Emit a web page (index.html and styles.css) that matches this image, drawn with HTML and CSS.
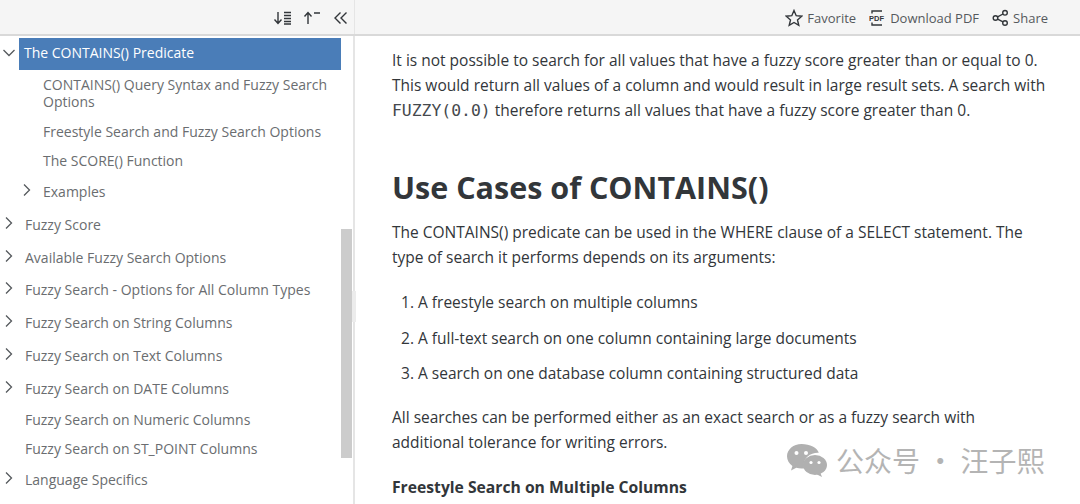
FILE: index.html
```html
<!DOCTYPE html>
<html lang="en">
<head>
    <meta charset="UTF-8">
    <title>Use Cases of CONTAINS()</title>
    <link rel="stylesheet" href="styles.css">
</head>
<body>
    <div class="page">
        <div class="topbar">
            <div class="toc-tools">
                <svg class="ico" width="20" height="16" viewBox="0 0 20 16"><path d="M5 2v11M1.500 9.500 5 13.500 8.500 9.500M11 2.500h7M11 5.500h7M11 8.500h7M11 11.500h7M11 14h7" /></svg>
                <svg class="ico" width="20" height="16" viewBox="0 0 20 16"><path d="M5 14V3M1.500 6.500 5 2.500 8.500 6.500M11 3h6" /></svg>
                <svg class="ico" width="16" height="16" viewBox="0 0 16 16"><path d="M7.500 2.500 2 8l5.500 5.500M13.500 2.500 8 8l5.500 5.500" /></svg>
            </div>
            <div class="actions">
                <span class="action">
                    <svg class="ico" width="18" height="18" viewBox="0 0 18 18"><path d="M9 1.500 11.200 6.700 16.800 7.200 12.500 10.900 13.800 16.400 9 13.500 4.200 16.400 5.500 10.900 1.200 7.200 6.800 6.700Z" /></svg>
                    Favorite
                </span>
                <span class="action">
                    <svg class="ico" width="17" height="18" viewBox="0 0 17 18"><path d="M3 4.500V2h10M3 13.500V16h10" /><text class="pdf-mark" x="0" y="11.500">PDF</text></svg>
                    Download PDF
                </span>
                <span class="action">
                    <svg class="ico" width="17" height="18" viewBox="0 0 17 18"><circle cx="13" cy="3.800" r="2.300" /><circle cx="13" cy="14" r="2.300" /><circle cx="3.500" cy="9" r="2.300" /><path d="M5.600 7.900 11 5M5.600 10.100 11 12.900" /></svg>
                    Share
                </span>
            </div>
        </div>
        <div class="main">
            <nav class="toc">
                <div class="row row-active">
                    <svg class="chev" width="14" height="14" viewBox="0 0 14 14"><path d="M1.500 4 7 9.500 12.500 4" /></svg>
                    <span class="row-label">The CONTAINS() Predicate</span>
                </div>
                <div class="row sub h46"><span class="row-label">CONTAINS() Query Syntax and Fuzzy Search Options</span></div>
                <div class="row sub h30"><span class="row-label">Freestyle Search and Fuzzy Search Options</span></div>
                <div class="row sub h29"><span class="row-label">The SCORE() Function</span></div>
                <div class="row sub">
                    <svg class="chev chev-sub" width="14" height="14" viewBox="0 0 14 14"><path d="M4 1.500 9.500 7 4 12.500" /></svg>
                    <span class="row-label">Examples</span>
                </div>
                <div class="row"><svg class="chev" width="14" height="14" viewBox="0 0 14 14"><path d="M4 1.500 9.500 7 4 12.500" /></svg><span class="row-label">Fuzzy Score</span></div>
                <div class="row h32"><svg class="chev" width="14" height="14" viewBox="0 0 14 14"><path d="M4 1.500 9.500 7 4 12.500" /></svg><span class="row-label">Available Fuzzy Search Options</span></div>
                <div class="row"><svg class="chev" width="14" height="14" viewBox="0 0 14 14"><path d="M4 1.500 9.500 7 4 12.500" /></svg><span class="row-label">Fuzzy Search - Options for All Column Types</span></div>
                <div class="row"><svg class="chev" width="14" height="14" viewBox="0 0 14 14"><path d="M4 1.500 9.500 7 4 12.500" /></svg><span class="row-label">Fuzzy Search on String Columns</span></div>
                <div class="row"><svg class="chev" width="14" height="14" viewBox="0 0 14 14"><path d="M4 1.500 9.500 7 4 12.500" /></svg><span class="row-label">Fuzzy Search on Text Columns</span></div>
                <div class="row h32"><svg class="chev" width="14" height="14" viewBox="0 0 14 14"><path d="M4 1.500 9.500 7 4 12.500" /></svg><span class="row-label">Fuzzy Search on DATE Columns</span></div>
                <div class="row h30"><span class="row-label">Fuzzy Search on Numeric Columns</span></div>
                <div class="row h29"><span class="row-label">Fuzzy Search on ST_POINT Columns</span></div>
                <div class="row"><svg class="chev" width="14" height="14" viewBox="0 0 14 14"><path d="M4 1.500 9.500 7 4 12.500" /></svg><span class="row-label">Language Specifics</span></div>
                <div class="scroll-thumb"></div>
                <div class="resize-grip"></div>
            </nav>
            <article class="content">
                <p class="first">It is not possible to search for all values that have a fuzzy score greater than or equal to 0. This would return all values of a column and would result in large result sets. A search with <code>FUZZY(0.0)</code> therefore returns all values that have a fuzzy score greater than 0.</p>
                <h2>Use Cases of CONTAINS()</h2>
                <p>The CONTAINS() predicate can be used in the WHERE clause of a SELECT statement. The type of search it performs depends on its arguments:</p>
                <ol>
                    <li>A freestyle search on multiple columns</li>
                    <li>A full-text search on one column containing large documents</li>
                    <li>A search on one database column containing structured data</li>
                </ol>
                <p>All searches can be performed either as an exact search or as a fuzzy search with additional tolerance for writing errors.</p>
                <h4>Freestyle Search on Multiple Columns</h4>
            </article>
        </div>
        <div class="watermark">
            <svg width="40" height="33" viewBox="0 0 40 33">
                <path class="wm-back" d="M14.500 0C6.500 0 0 5.500 0 12.300c0 3.900 2.100 7.300 5.400 9.600L4 26.500l5.300-2.800c1.700.5 3.400.8 5.200.8 1 0 1.900-.1 2.800-.3a11 11 0 0 1-.5-3.200c0-6.800 6.300-12.200 14-12.200h1C30.300 3.500 23 0 14.500 0Z" />
                <ellipse class="wm-front" cx="28" cy="21" rx="12" ry="10" />
                <path class="wm-front" d="M33 28l2 5-6-3Z" />
                <circle class="wm-eye" cx="9.500" cy="9" r="2" /><circle class="wm-eye" cx="19" cy="9" r="2" />
                <circle class="wm-eye" cx="24" cy="18.500" r="1.600" /><circle class="wm-eye" cx="32" cy="18.500" r="1.600" />
            </svg>
            <span>公众号 · 汪子熙</span>
        </div>
    </div>
</body>
</html>
```

FILE: styles.css
```css
* {
    box-sizing: border-box;
}
html, body {
    margin: 0;
    height: 100%;
    overflow: hidden;
    background: white;
}
body {
    font-family: 'Open Sans', 'Noto Sans', sans-serif;
    color: #32363a;
}
.page {
    position: relative;
    height: 504px;
    display: flex;
    flex-direction: column;
    overflow: hidden;
}
.ico {
    fill: none;
    stroke: #32363a;
    stroke-width: 1.4;
    flex: none;
}
.topbar {
    height: 36px;
    flex: none;
    display: flex;
    background: #f5f5f5;
    border-bottom: 2px solid #d9d9d9;
}
.toc-tools {
    width: 355px;
    display: flex;
    align-items: center;
    justify-content: flex-end;
    gap: 10px;
    padding: 2px 5px 0 0;
    border-right: 1px solid #e5e5e5;
}
.actions {
    flex: 1;
    display: flex;
    align-items: center;
    justify-content: flex-end;
    gap: 13px;
    padding: 2px 32px 0 0;
}
.action {
    display: flex;
    align-items: center;
    gap: 4px;
    font-size: 13px;
    color: #55595d;
}
.pdf-mark {
    font-family: 'Liberation Sans', sans-serif;
    font-size: 7.500px;
    font-weight: bold;
    stroke: none;
    fill: #32363a;
}
.main {
    flex: 1;
    display: flex;
    min-height: 0;
}
.toc {
    position: relative;
    width: 355px;
    flex: none;
    padding-top: 2px;
    border-right: 2px solid #e5e5e5;
    font-size: 14px;
    color: #6a6d70;
}
.row {
    display: flex;
    align-items: center;
    height: 33px;
    padding-left: 25px;
    position: relative;
}
.row-label {
    line-height: 17px;
}
.chev {
    position: absolute;
    left: 2px;
    top: 8px;
    fill: none;
    stroke: #55595d;
    stroke-width: 1.300;
}
.row-active {
    height: 32px;
    color: white;
}
.row-active .row-label {
    background: #4a7db8;
    align-self: stretch;
    display: flex;
    align-items: center;
    width: 322px;
    margin-left: -6px;
    padding: 0 0 3px 5px;
}
.sub {
    padding-left: 43px;
    padding-right: 20px;
}
.h46 {
    height: 46px;
}
.h32 {
    height: 32px;
}
.h30 {
    height: 30px;
}
.h29 {
    height: 29px;
}
.chev-sub {
    left: 20px;
}
.scroll-thumb {
    position: absolute;
    left: 341px;
    top: 193px;
    width: 11px;
    height: 229px;
    background: #cccccc;
}
.resize-grip {
    position: absolute;
    right: -3px;
    top: 255px;
    width: 4px;
    height: 31px;
    background: #ececec;
}
.content {
    flex: 1;
    padding: 0 30px 0 37px;
    font-size: 15.500px;
    line-height: 25px;
}
.content p {
    margin: 0 0 16px;
}
.content .first {
    margin-top: 12px;
    margin-bottom: 46px;
}
code {
    font-family: 'DejaVu Sans Mono', monospace;
    font-size: 16.400px;
    color: #45494d;
}
h2 {
    margin: 0 0 15px;
    font-size: 30.500px;
    line-height: 36px;
    font-weight: 700;
}
ol {
    margin: 20px 0 19px;
    padding-left: 26px;
}
li {
    margin-bottom: 10.500px;
}
h4 {
    margin: 20px 0 0;
    font-size: 15.700px;
    font-weight: 700;
}
.watermark {
    position: absolute;
    left: 787px;
    top: 444px;
    display: flex;
    align-items: center;
    gap: 9px;
    font-family: 'Noto Sans CJK SC', sans-serif;
    font-size: 28px;
    line-height: 33px;
    color: #b4b4b4;
}
.wm-back, .wm-front {
    fill: #b0b0b0;
}
.wm-eye {
    fill: white;
}
```
